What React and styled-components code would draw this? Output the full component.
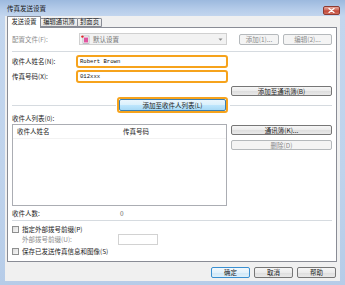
import React from "react";
import styled, { createGlobalStyle } from "styled-components";

const Global = createGlobalStyle`
  html, body { margin: 0; padding: 0; background: #fff; }
  body {
    font-family: "Noto Sans CJK SC", "Noto Sans", sans-serif;
    font-size: 6.5px;
    color: #1c1c1c;
  }
  * { box-sizing: border-box; }
`;

const Window = styled.div`
  width: 345px;
  height: 285px;
  display: flex;
  flex-direction: column;
  padding: 0 5px 4px 5px;
  background: linear-gradient(#9cb9de 0px, #b4cbe9 9px, #c3d6ee 16px, #bfd3ec 60%, #b6cce8 100%);
`;

const TitleBar = styled.div`
  height: 16px;
  display: flex;
  justify-content: space-between;
  align-items: flex-start;
  padding-left: 2px;
`;

const Title = styled.div`
  line-height: 16px;
  font-size: 6.5px;
  color: #1a1a1a;
`;

const CloseButton = styled.div`
  width: 17px;
  height: 9px;
  margin-top: 6px;
  border: 1px solid #8c3a32;
  border-radius: 2px;
  background: linear-gradient(#e8a99f, #d06a5c 45%, #c14536 55%, #d3705f);
  display: flex;
  align-items: center;
  justify-content: center;
`;

const Client = styled.div`
  flex: 1;
  background: #f0f0f0;
  display: flex;
  flex-direction: column;
  padding: 0 3px 0 2px;
`;

const TabStrip = styled.div`
  height: 11px;
  display: flex;
  align-items: flex-end;
`;

const Tab = styled.div`
  position: relative;
  height: ${(p) => (p.$active ? "12px" : "9px")};
  width: ${(p) => p.$w}px;
  margin-left: ${(p) => (p.$first ? "0" : "-1px")};
  margin-bottom: ${(p) => (p.$active ? "-1px" : "0")};
  z-index: ${(p) => (p.$active ? 1 : 0)};
  border: 1px solid #898c95;
  border-bottom: ${(p) => (p.$active ? "none" : "1px solid #898c95")};
  border-radius: 1px 1px 0 0;
  background: ${(p) => (p.$active ? "#fff" : "linear-gradient(#f3f3f3, #e4e4e4)")};
  display: flex;
  align-items: center;
  justify-content: center;
  font-size: 6.3px;
  line-height: 1;
`;

const Panel = styled.div`
  height: 235px;
  background: #fff;
  border: 1px solid #898c95;
  padding: 5px 4px 0 4px;
  display: flex;
  flex-direction: column;
`;

const Grid = styled.div`
  display: grid;
  grid-template-columns: 64px 152px 3px 101px;
  align-items: center;
  height: ${(p) => p.$h}px;
  margin-top: ${(p) => p.$mt || 0}px;
`;

const Label = styled.div`
  color: ${(p) => (p.$disabled ? "#8d8d8d" : "#1c1c1c")};
  padding-left: ${(p) => p.$indent || 0}px;
  white-space: nowrap;
  line-height: 1;
`;

const Combo = styled.div`
  margin-left: 3px;
  width: 148px;
  height: 12px;
  border: 1px solid #d0d0d0;
  background: #f2f2f2;
  display: flex;
  align-items: center;
  padding: 0 3px 0 1px;
  color: #747474;
  gap: 3px;
`;

const ComboText = styled.span`
  flex: 1;
  line-height: 1;
`;

const RightCell = styled.div`
  grid-column: 4;
  display: flex;
  gap: 4px;
  padding-left: ${(p) => p.$pl || 0}px;
  height: 100%;
  align-items: center;
`;

const Button = styled.div`
  width: ${(p) => (p.$w ? `${p.$w}px` : "100%")};
  height: ${(p) => p.$h || 10}px;
  border: 1px solid ${(p) => (p.$disabled ? "#b5b9bc" : p.$default ? "#3a8fd0" : "#767676")};
  border-radius: 2px;
  background: ${(p) =>
    p.$disabled
      ? "#f4f4f4"
      : p.$default
      ? "linear-gradient(#f2f9fd, #e3f1fb 50%, #cfe7f7 51%, #dff0fa)"
      : "linear-gradient(#f6f6f6, #ebebeb 50%, #dddddd 51%, #e9e9e9)"};
  color: ${(p) => (p.$disabled ? "#8b8b8b" : "#1c1c1c")};
  display: flex;
  align-items: center;
  justify-content: center;
  line-height: 1;
  white-space: nowrap;
`;

const Separator = styled.div`
  height: 1px;
  background: #d6dbe0;
  margin-top: ${(p) => p.$mt || 0}px;
`;

const Highlight = styled.div`
  grid-column: 2;
  height: 13px;
  border: 2px solid #f6a31c;
  border-radius: 3px;
  background: #fff;
  display: flex;
  align-items: center;
  padding-left: 2px;
`;

const MonoText = styled.span`
  font-family: "Liberation Mono", "DejaVu Sans Mono", monospace;
  font-size: 5.6px;
  line-height: 1;
  color: #111;
`;

const AddRow = styled.div`
  display: flex;
  align-items: center;
  height: 16px;
  margin-top: 1px;
`;

const Line = styled.div`
  height: 1px;
  background: #d6dbe0;
  flex: ${(p) => (p.$w ? `0 0 ${p.$w}px` : "1")};
`;

const HighlightButton = styled.div`
  width: 111px;
  height: 16px;
  margin: 0 2px 0 1px;
  border: 2px solid #f6a31c;
  border-radius: 3px;
  display: flex;
`;

const HighlightInner = styled.div`
  flex: 1;
  border: 1px solid #3c7fb1;
  border-radius: 2px;
  background: linear-gradient(#eaf6fd, #d9f0fc 50%, #bee6fd 51%, #a7d9f5);
  display: flex;
  align-items: center;
  justify-content: center;
  line-height: 1;
  color: #1c1c1c;
`;

const TextRow = styled.div`
  height: ${(p) => p.$h || 8}px;
  margin-top: ${(p) => p.$mt || 0}px;
  display: flex;
  align-items: center;
  line-height: 1;
`;

const ListSection = styled.div`
  display: grid;
  grid-template-columns: 215px 4px 101px;
  margin-top: 2px;
  height: 82px;
`;

const ListBox = styled.div`
  border: 1px solid #abadb3;
  background: #fff;
  display: flex;
  flex-direction: column;
`;

const ListHeader = styled.div`
  display: grid;
  grid-template-columns: 106px 1fr;
  height: 14px;
  align-items: center;
  padding-left: 4px;
  border-bottom: 1px solid #f2f2f2;
`;

const HeaderCell = styled.div`
  line-height: 1;
  color: #1c1c1c;
`;

const SideButtons = styled.div`
  grid-column: 3;
  display: flex;
  flex-direction: column;
  gap: 5px;
  padding-top: 1px;
`;

const CountRow = styled.div`
  display: grid;
  grid-template-columns: 108px 1fr;
  height: 8px;
  margin-top: 3px;
  align-items: center;
  line-height: 1;
`;

const CountValue = styled.span`
  color: #6a6a6a;
`;

const CheckRow = styled.div`
  display: flex;
  align-items: center;
  gap: 3px;
  height: 7px;
  margin-top: ${(p) => p.$mt || 0}px;
  line-height: 1;
`;

const CheckBox = styled.div`
  width: 7px;
  height: 7px;
  border: 1px solid #8e8f8f;
  background: linear-gradient(135deg, #dcdcdc, #f8f8f8);
`;

const PrefixRow = styled.div`
  display: grid;
  grid-template-columns: 106px 40px;
  height: 11px;
  margin-top: 1px;
  align-items: center;
`;

const SmallInput = styled.div`
  height: 11px;
  border: 1px solid #d2d2d2;
  background: #fff;
`;

const Footer = styled.div`
  flex: 1;
  display: flex;
  justify-content: flex-end;
  align-items: flex-start;
  gap: 4px;
  padding: 5px 1px 0 0;
`;

const ProfileIcon = () => (
  <svg width="9" height="9" viewBox="0 0 9 9">
    <rect x="2" y="1" width="6" height="7.5" fill="#fff" stroke="#9a9aa6" strokeWidth="0.6" />
    <rect x="3" y="3" width="4" height="4.5" fill="#e0559f" />
    <rect x="3" y="2" width="4" height="1" fill="#f2a7cf" />
    <circle cx="1.4" cy="1.6" r="1.2" fill="#e0262a" />
  </svg>
);

const DropArrow = () => (
  <svg width="5" height="3" viewBox="0 0 5 3">
    <path d="M0.5 0.5 L4.5 0.5 L2.5 2.7 Z" fill="#8a8a8a" />
  </svg>
);

const CloseX = () => (
  <svg width="7" height="5" viewBox="0 0 7 5">
    <path d="M1 0.6 L6 4.4 M6 0.6 L1 4.4" stroke="#fff" strokeWidth="1.3" strokeLinecap="round" />
  </svg>
);

export default function App() {
  return (
    <>
      <Global />
      <Window>
        <TitleBar>
          <Title>传真发送设置</Title>
          <CloseButton>
            <CloseX />
          </CloseButton>
        </TitleBar>
        <Client>
          <TabStrip>
            <Tab $active $first $w={34}>发送设置</Tab>
            <Tab $w={38}>编辑通讯簿</Tab>
            <Tab $w={25}>封面页</Tab>
          </TabStrip>
          <Panel>
            <Grid $h={12}>
              <Label $disabled>配置文件(F):</Label>
              <Combo>
                <ProfileIcon />
                <ComboText>默认设置</ComboText>
                <DropArrow />
              </Combo>
              <RightCell $pl={8}>
                <Button $disabled $w={40} $h={11}>添加(1)...</Button>
                <Button $disabled $w={49} $h={11}>编辑(2)...</Button>
              </RightCell>
            </Grid>
            <Separator $mt={6} />
            <Grid $h={13} $mt={3}>
              <Label>收件人姓名(N):</Label>
              <Highlight>
                <MonoText>Robert Brown</MonoText>
              </Highlight>
            </Grid>
            <Grid $h={13} $mt={2}>
              <Label>传真号码(X):</Label>
              <Highlight>
                <MonoText>012xxx</MonoText>
              </Highlight>
            </Grid>
            <Grid $h={10} $mt={3}>
              <RightCell>
                <Button>添加至通讯簿(B)</Button>
              </RightCell>
            </Grid>
            <AddRow>
              <Line />
              <HighlightButton>
                <HighlightInner>添加至收件人列表(L)</HighlightInner>
              </HighlightButton>
              <Line $w={102} />
            </AddRow>
            <TextRow $h={8} $mt={1}>收件人列表(0):</TextRow>
            <ListSection>
              <ListBox>
                <ListHeader>
                  <HeaderCell>收件人姓名</HeaderCell>
                  <HeaderCell>传真号码</HeaderCell>
                </ListHeader>
              </ListBox>
              <SideButtons>
                <Button $h={10}>通讯簿(K)...</Button>
                <Button $h={10} $disabled>删除(D)</Button>
              </SideButtons>
            </ListSection>
            <CountRow>
              <span>收件人数:</span>
              <CountValue>0</CountValue>
            </CountRow>
            <Separator $mt={3} />
            <CheckRow $mt={5}>
              <CheckBox />
              <span>指定外部拨号前缀(P)</span>
            </CheckRow>
            <PrefixRow>
              <Label $disabled $indent={10}>外部拨号前缀(U):</Label>
              <SmallInput />
            </PrefixRow>
            <CheckRow $mt={3}>
              <CheckBox />
              <span>保存已发送传真信息和图像(S)</span>
            </CheckRow>
          </Panel>
          <Footer>
            <Button $default $w={39} $h={11}>确定</Button>
            <Button $w={39} $h={11}>取消</Button>
            <Button $w={39} $h={11}>帮助</Button>
          </Footer>
        </Client>
      </Window>
    </>
  );
}
